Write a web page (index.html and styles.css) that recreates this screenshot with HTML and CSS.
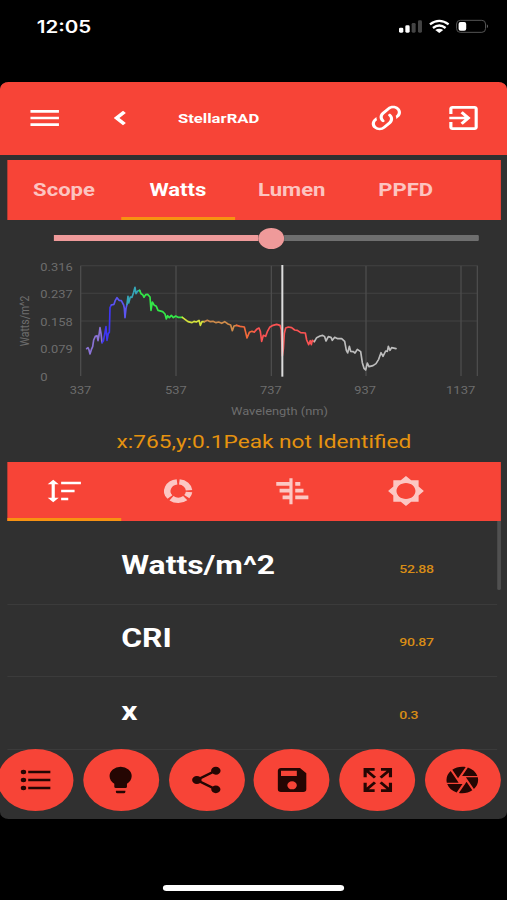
FILE: index.html
```html
<!DOCTYPE html>
<html lang="en">
<head>
<meta charset="utf-8">
<title>StellarRAD</title>
<link rel="stylesheet" href="styles.css">
</head>
<body>
<div class="phone">
  <div class="status">
    <span class="clock">12:05</span>
    <svg class="status-icons" viewBox="0 0 276 48" preserveAspectRatio="none">
      <g fill="#fff"><rect x="3" y="29" width="13" height="15" rx="4"/><rect x="22" y="22" width="13" height="22" rx="4"/></g>
      <g fill="#444"><rect x="41" y="15" width="12" height="29" rx="4"/><rect x="60" y="7" width="12" height="37" rx="4"/></g>
      <g fill="none" stroke="#fff" stroke-width="7"><path d="M96 19Q124 -2 152 19"/><path d="M105 30Q124 15 143 30"/></g>
      <path d="M112 36Q124 28 136 36L124 45Z" fill="#fff"/>
      <rect x="176" y="7" width="87" height="36" rx="11" fill="none" stroke="#555" stroke-width="3"/>
      <rect x="182" y="12" width="23" height="26" rx="6" fill="#fff"/>
      <path d="M267 19Q274 25 267 31Z" fill="#666"/>
    </svg>
  </div>

  <main class="app">
    <header class="bar">
      <svg class="icon menu" viewBox="0 0 24 24" preserveAspectRatio="none"><path d="M3 18h18v-2H3zM3 13h18v-2H3zM3 6v2h18V6z"/></svg>
      <svg class="icon back" viewBox="0 0 24 24"><path d="M16.100 7.700 14.100 5.700 7.600 12l6.500 6.300 2-2L11.600 12z"/></svg>
      <h1 class="title">StellarRAD</h1>
      <svg class="icon link" viewBox="0 0 24 24" preserveAspectRatio="none"><path d="M10.59,13.41C11,13.8 11,14.44 10.59,14.83C10.2,15.22 9.56,15.22 9.17,14.83C7.22,12.88 7.22,9.71 9.17,7.76V7.76L12.71,4.22C14.66,2.27 17.83,2.27 19.78,4.22C21.73,6.17 21.73,9.34 19.78,11.29L18.29,12.78C18.3,11.96 18.17,11.14 17.89,10.36L18.36,9.88C19.54,8.71 19.54,6.81 18.36,5.64C17.19,4.46 15.29,4.46 14.12,5.64L10.59,9.17C9.41,10.34 9.41,12.24 10.59,13.41M13.41,9.17C13.8,8.78 14.44,8.78 14.83,9.17C16.78,11.12 16.78,14.29 14.83,16.24V16.24L11.29,19.78C9.34,21.73 6.17,21.73 4.22,19.78C2.27,17.83 2.27,14.66 4.22,12.71L5.71,11.22C5.7,12.04 5.83,12.86 6.11,13.65L5.64,14.12C4.46,15.29 4.46,17.19 5.64,18.36C6.81,19.54 8.71,19.54 9.88,18.36L13.41,14.83C14.59,13.66 14.59,11.76 13.41,10.59C13,10.2 13,9.56 13.41,9.17Z"/></svg>
      <svg class="icon exit" viewBox="0 0 24 24" preserveAspectRatio="none"><path d="M10.09 15.59L11.5 17l5-5-5-5-1.41 1.41L12.67 11H3v2h9.67l-2.58 2.59zM19 3H5c-1.11 0-2 .9-2 2v4h2V5h14v14H5v-4H3v4c0 1.100.89 2 2 2h14c1.100 0 2-.9 2-2V5c0-1.100-.9-2-2-2z"/></svg>
    </header>

    <nav class="tabs">
      <div class="tab">Scope</div>
      <div class="tab active">Watts</div>
      <div class="tab">Lumen</div>
      <div class="tab">PPFD</div>
    </nav>

    <div class="slider"><div class="filled"></div><div class="thumb"></div><div class="rest"></div></div>

    <svg class="chart" viewBox="0 0 1521 510" preserveAspectRatio="none">
      <g class="grid">
        <path d="M242 32H1433M242 115H1433M242 198H1433"/>
        <path class="strong" d="M242 32V363M528 32V363M814 32V363M1098 32V363M1383 32V363M1432 32V363"/>
      </g>
      <g class="labels">
        <text x="121" y="47" textLength="97" lengthAdjust="spacingAndGlyphs">0.316</text>
        <text x="121" y="129" textLength="97" lengthAdjust="spacingAndGlyphs">0.237</text>
        <text x="121" y="212" textLength="97" lengthAdjust="spacingAndGlyphs">0.158</text>
        <text x="121" y="294" textLength="97" lengthAdjust="spacingAndGlyphs">0.079</text>
        <text x="121" y="377" textLength="22" lengthAdjust="spacingAndGlyphs">0</text>
        <text x="209" y="418" textLength="65" lengthAdjust="spacingAndGlyphs">337</text>
        <text x="495" y="418" textLength="65" lengthAdjust="spacingAndGlyphs">537</text>
        <text x="780" y="418" textLength="65" lengthAdjust="spacingAndGlyphs">737</text>
        <text x="1063" y="418" textLength="65" lengthAdjust="spacingAndGlyphs">937</text>
        <text x="1338" y="418" textLength="88" lengthAdjust="spacingAndGlyphs">1137</text>
        <text x="693" y="480" textLength="291" lengthAdjust="spacingAndGlyphs">Wavelength (nm)</text>
        <text class="axis" transform="translate(87 274) rotate(-90)" textLength="152" lengthAdjust="spacingAndGlyphs">Watts/m^2</text>
      </g>
      <g class="line">
        <polyline stroke="#8b73d6" points="260,281 264,278 267,285 270,297 274,284 278,275 281,255 286,244 291,242 294,257 297,240 300,218 303,235 306,263"/>
        <polyline stroke="#3f36f2" points="306,263 310,258 314,238 318,215 321,256 325,235 328,232 330,158 334,150"/>
        <polyline stroke="#5c55f2" points="334,150 342,148 346,136 351,128 357,136 364,137 371,150 373,160 375,188 378,160 381,148"/>
        <polyline stroke="#35a6b8" points="381,148 384,124 386,144 391,126 396,127 401,112 405,97 408,116 413,108 419,106"/>
        <polyline stroke="#33e848" points="419,106 423,116 428,119 432,127 437,119 443,118 450,126 453,166 457,141 463,151 469,154 474,166 488,170 495,177 499,192 503,182 508,188 514,181 520,188 527,183 534,187 547,187"/>
        <polyline stroke="#d4e33c" points="547,187 556,194 564,200 576,203 582,199 589,201 597,196 601,211 606,200 613,200"/>
        <polyline stroke="#cf8b4a" points="613,200 622,196 631,200 639,199 648,203 656,201 665,205 674,200 684,207 692,210 697,227 702,213 710,211"/>
        <polyline stroke="#f36a3b" points="710,211 720,214 733,216 737,232 741,249 748,232 756,229 763,231"/>
        <polyline stroke="#fb5353" points="763,231 770,223 777,219 781,229 785,259 790,241 797,244 802,230 809,217 819,211 830,208 840,211 844,224 847,303 850,282 853,235 857,219 865,216 875,218 884,225 892,226 902,233 916,234 920,255 926,269 931,257 934,269 937,256 943,260"/>
        <polyline stroke="#bdbdbd" points="943,260 950,248 960,243 968,241 974,245 978,258 985,245 993,247 997,256 1004,247 1013,251 1025,251 1034,259 1039,286 1043,294 1048,274 1052,289 1060,290 1065,294 1072,283 1082,290 1087,323 1092,340 1097,345 1102,324 1107,335 1119,332 1128,326 1136,313 1143,293 1149,304 1157,288 1162,289 1165,274 1170,286 1175,278 1188,281"/>
      </g>
      <path class="cursor" d="M847 30V365"/>
    </svg>

    <p class="reading"><span>x:765,y:0.1Peak not Identified</span></p>

    <nav class="tabs lower">
      <div class="tab active"><svg class="icon" viewBox="0 0 24 24" preserveAspectRatio="none"><path d="M10,13V11H18.500V13H10M10,19V17H14.500V19H10M10,7V5H22.500V7H10M6,17H8.500L5,20.500L1.500,17H4V7H1.500L5,3.500L8.500,7H6V17Z"/></svg></div>
      <div class="tab"><svg class="icon" viewBox="0 0 24 24" preserveAspectRatio="none"><g fill="none" stroke="#fff" stroke-width="4.100"><path d="M12.720 5.140A6.900 6.900 0 0 1 18.870 11.400"/><path d="M18.860 12.720A6.900 6.900 0 0 1 17.440 16.250"/><path d="M16.440 17.290A6.900 6.900 0 0 1 7.750 17.440"/><path d="M6.790 16.530A6.900 6.900 0 0 1 11.280 5.140"/></g></svg></div>
      <div class="tab"><svg class="icon" viewBox="0 0 24 24" preserveAspectRatio="none"><path d="M10.300 2.400h2v19.500h-2zM2 5.200h8.500v2.900H2zM4.100 10.300h6.400v2.900h-6.400zM6 15.300h4.400v2.900H6zM14 5.200h3.200v2.900H14zM14 10.300h5.200v2.900H14zM14 15.300h8.300v2.900H14z"/></svg></div>
      <div class="tab"><svg class="icon" viewBox="0 0 24 24" preserveAspectRatio="none"><path d="M20 15.310L23.310 12 20 8.690V4h-4.690L12 .69 8.690 4H4v4.690L.69 12 4 15.310V20h4.690L12 23.310 15.310 20H20v-4.690zM12 18c-3.310 0-6-2.690-6-6s2.690-6 6-6 6 2.690 6 6-2.690 6-6 6z"/></svg></div>
    </nav>

    <section class="list">
      <div class="rows">
        <div class="row"><span class="name">Watts/m^2</span><span class="value">52.88</span></div>
        <div class="row"><span class="name">CRI</span><span class="value">90.87</span></div>
        <div class="row"><span class="name">x</span><span class="value">0.3</span></div>
      </div>
      <div class="scrollbar"></div>
    </section>

    <footer class="actions">
      <div class="fab"><svg class="icon" viewBox="0 0 24 24" preserveAspectRatio="none"><path d="M7 5h14v2H7zM7 11h14v2H7zM7 17h14v2H7z"/><circle cx="4" cy="6" r="1.700"/><circle cx="4" cy="12" r="1.700"/><circle cx="4" cy="18" r="1.700"/></svg></div>
      <div class="fab"><svg class="icon" viewBox="0 0 24 24" preserveAspectRatio="none"><path d="M12,2A7,7 0 0,0 5,9C5,11.380 6.190,13.470 8,14.740V17A1,1 0 0,0 9,18H15A1,1 0 0,0 16,17V14.740C17.810,13.470 19,11.380 19,9A7,7 0 0,0 12,2M9,21A1,1 0 0,0 10,22H14A1,1 0 0,0 15,21V20H9V21Z"/></svg></div>
      <div class="fab"><svg class="icon" viewBox="0 0 24 24" preserveAspectRatio="none"><path d="M18 16.080c-.76 0-1.440.3-1.960.77L8.910 12.700c.05-.23.09-.46.09-.7s-.04-.47-.09-.7l7.050-4.110c.54.5 1.250.81 2.040.81 1.660 0 3-1.340 3-3s-1.340-3-3-3-3 1.340-3 3c0 .24.04.47.09.7L8.040 9.810C7.500 9.310 6.790 9 6 9c-1.660 0-3 1.340-3 3s1.340 3 3 3c.79 0 1.500-.31 2.040-.81l7.120 4.160c-.05.21-.08.43-.08.65 0 1.610 1.310 2.920 2.920 2.920s2.920-1.310 2.920-2.920-1.310-2.920-2.920-2.920z"/></svg></div>
      <div class="fab"><svg class="icon" viewBox="0 0 24 24" preserveAspectRatio="none"><path d="M15,9H5V5H15M12,19A3,3 0 0,1 9,16A3,3 0 0,1 12,13A3,3 0 0,1 15,16A3,3 0 0,1 12,19M17,3H5C3.890,3 3,3.900 3,5V19A2,2 0 0,0 5,21H19A2,2 0 0,0 21,19V7L17,3Z"/></svg></div>
      <div class="fab"><svg class="icon" viewBox="0 0 24 24" preserveAspectRatio="none"><path d="M9.500,13.090L10.910,14.500L6.410,19H10V21H3V14H5V17.590L9.500,13.090M10.910,9.500L9.500,10.910L5,6.410V10H3V3H10V5H6.410L10.910,9.500M14.500,13.090L19,17.590V14H21V21H14V19H17.590L13.090,14.500L14.500,13.090M13.090,9.500L17.590,5H14V3H21V10H19V6.410L14.500,10.910L13.090,9.500Z"/></svg></div>
      <div class="fab"><svg class="icon" viewBox="0 0 24 24" preserveAspectRatio="none"><path d="M13.730,15L9.830,21.760C10.530,21.910 11.250,22 12,22C14.400,22 16.600,21.150 18.320,19.750L14.660,13.400M2.460,15C3.380,17.920 5.610,20.260 8.450,21.340L12.120,15M8.540,12L4.640,5.250C3,7 2,9.390 2,12C2,12.680 2.070,13.350 2.200,14H9.690M21.800,10H14.310L14.600,10.500L19.360,18.750C21,16.970 22,14.600 22,12C22,11.310 21.930,10.640 21.800,10M21.540,9C20.620,6.070 18.390,3.740 15.550,2.660L11.880,9M9.400,10.500L14.170,2.240C13.470,2.090 12.750,2 12,2C9.600,2 7.400,2.840 5.680,4.250L9.340,10.600L9.400,10.500Z"/></svg></div>
    </footer>
  </main>
  <div class="home"></div>
</div>
</body>
</html>
```
FILE: styles.css
```css
* { box-sizing: border-box; }
body { margin: 0; width: 507px; height: 900px; overflow: hidden; background: #000; }

/* 414-unit wide phone layout, widened to the window */
.phone {
  width: 414px; height: 900px;
  display: flex; flex-direction: column;
  transform: scaleX(1.22464); transform-origin: 0 0;
  font-family: Roboto, "Liberation Sans", sans-serif;
  color: #fff; background: #000;
}
.icon { display: block; width: 31px; height: 32px; fill: currentColor; flex: none; }

.status { height: 82px; display: flex; justify-content: space-between; padding: 16px 14.500px 0 30px; }
.clock { font: 600 16.800px/22px Inter, sans-serif; }
.status-icons { width: 75px; height: 16px; margin-top: 2px; }

.app { height: 737px; display: flex; flex-direction: column; background: #303030; border-radius: 7px; overflow: hidden; flex: none; }
.bar { height: 72.5px; flex: none; display: flex; align-items: center; background: #f74437; padding-left: 21px; }
.back { width: 28px; height: 28px; margin-left: 32.300px; }
.title { margin: 0 0 0 33px; width: 155px; font-size: 13.600px; line-height: 20px; font-weight: 700; }
.exit { margin-left: 31.300px; }

.tabs { height: 59.5px; flex: none; margin: 5.500px 5px 0 6px; display: flex; background: #f74437; }
.tab {
  width: 93px; padding: 2px .5px 0 0; display: flex; align-items: center; justify-content: center;
  border-bottom: 3px solid transparent; color: rgba(255, 255, 255, .7);
  font-size: 18px; font-weight: 700;
}
.tab .icon { opacity: .7; color: #fff; }
.tab.active { color: #fff; border-color: #f79212; }
.tab.active .icon { opacity: 1; }

.slider { height: 37px; margin: 0 23.500px 0 44px; display: flex; align-items: center; flex: none; }
.filled { width: 167px; height: 5.500px; background: #ef9a9a; }
.thumb { width: 21px; height: 21px; border-radius: 50%; background: #ef9a9a; }
.rest { flex: 1; height: 5.500px; background: #6f6f6f; border-radius: 0 1px 1px 0; }

.chart { width: 414px; height: 170px; flex: none; display: block; margin-top: -1.500px; }
.grid path { fill: none; stroke: #424242; stroke-width: 3; }
.grid .strong { stroke: #4c4c4c; stroke-width: 4; }
.labels text { fill: #6d6d6d; font-size: 33px; }
.labels .axis { font-size: 36px; }
.line polyline { fill: none; stroke-width: 5; stroke-linejoin: round; stroke-linecap: round; }
.cursor { stroke: #dcdcdc; stroke-width: 6; }

.reading { margin: 0; height: 36.500px; flex: none; text-align: center; color: #e6930f; font-size: 18.500px; line-height: 34px; padding-left: 17px; }

.lower { margin-top: 0; }
.lower .tab { padding-top: 2px; }

.list { display: flex; margin: 0 5px 0 6px; flex: none; }
.rows { flex: 1; }
.row { height: 72.700px; display: flex; align-items: center; border-bottom: 1px solid #3b3b3b; padding: 0 0 5px 93px; }
.row:first-child { height: 83.500px; padding: 5px 0 0 93px; }
.name { width: 227px; font-size: 26px; font-weight: 700; line-height: 32px; }
.value { color: #d88d16; font-size: 11.500px; letter-spacing: -.25px; line-height: 16px; padding-top: 8px; font-weight: 500; }
.scrollbar { width: 3px; height: 69px; background: #505050; border-radius: 0 0 2px 2px; }

.actions { display: flex; gap: 7.800px; margin: -1.200px 0 0 -2px; flex: none; }
.fab { width: 62px; height: 62px; border-radius: 50%; background: #f74437; color: #250603; display: flex; align-items: center; justify-content: center; flex: none; }

.home { width: 148px; height: 6px; border-radius: 3px; background: #fff; margin: 66px auto 0; flex: none; }
```
